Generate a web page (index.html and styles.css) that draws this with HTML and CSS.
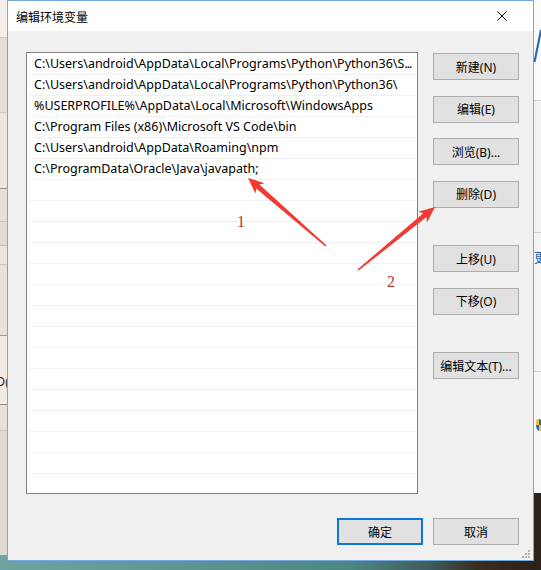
FILE: index.html
```html
<!DOCTYPE html>
<html lang="zh-CN">
<head>
<meta charset="utf-8">
<title>编辑环境变量</title>
<link rel="stylesheet" href="styles.css">
</head>
<body>
<div class="desktop">
  <div class="bg-left">
    <span class="peek-text">D(</span>
  </div>

  <div class="dialog">
    <div class="titlebar">
      <span class="title">编辑环境变量</span>
      <svg class="close" width="10" height="10" viewBox="0 0 10 10"><path d="M0.5 0.5 L9.5 9.5 M9.5 0.5 L0.5 9.5" stroke="#000" stroke-width="1" fill="none"/></svg>
    </div>
    <div class="body">
      <div class="main">
        <div class="list">
          <div class="row">C:\Users\android\AppData\Local\Programs\Python\Python36\S<span class="ell">...</span></div>
          <div class="row">C:\Users\android\AppData\Local\Programs\Python\Python36\</div>
          <div class="row">%USERPROFILE%\AppData\Local\Microsoft\WindowsApps</div>
          <div class="row">C:\Program Files (x86)\Microsoft VS Code\bin</div>
          <div class="row">C:\Users\android\AppData\Roaming\npm</div>
          <div class="row">C:\ProgramData\Oracle\Java\javapath;</div>
          <div class="row"></div>
          <div class="row"></div>
          <div class="row"></div>
          <div class="row"></div>
          <div class="row"></div>
          <div class="row"></div>
          <div class="row"></div>
          <div class="row"></div>
          <div class="row"></div>
          <div class="row"></div>
          <div class="row"></div>
          <div class="row"></div>
          <div class="row"></div>
          <div class="row"></div>
          <div class="row"></div>
        </div>
        <div class="side">
          <div class="btn">新建(N)</div>
          <div class="btn">编辑(E)</div>
          <div class="btn">浏览(B)...</div>
          <div class="btn">删除(D)</div>
          <div class="btn gap-lg">上移(U)</div>
          <div class="btn">下移(O)</div>
          <div class="btn gap-lg">编辑文本(T)...</div>
        </div>
      </div>
      <div class="footer">
        <div class="btn default">确定</div>
        <div class="btn">取消</div>
      </div>
    </div>
    <svg class="grip" width="9" height="9" viewBox="0 0 9 9">
      <rect x="7" y="1" width="2" height="2" fill="#b4b4b4"/>
      <rect x="4" y="4" width="2" height="2" fill="#b4b4b4"/>
      <rect x="7" y="4" width="2" height="2" fill="#b4b4b4"/>
      <rect x="1" y="7" width="2" height="2" fill="#b4b4b4"/>
      <rect x="4" y="7" width="2" height="2" fill="#b4b4b4"/>
      <rect x="7" y="7" width="2" height="2" fill="#b4b4b4"/>
    </svg>
  </div>

  <div class="bg-right">
    <svg class="peek-a" width="7" height="40" viewBox="0 0 7 40"><path d="M0.5 38 L7 6" stroke="#2b6db5" stroke-width="2.2" fill="none"/></svg>
    <span class="peek-cn">更</span>
    <svg class="peek-shield" width="7" height="12" viewBox="0 0 7 12"><path d="M3 0 L7 1.5 L7 12 L3 12 Q0 10 0 6 L0 1.5 Z" fill="#2a64b8"/><path d="M3 6 L7 6 L7 12 L3 12 Z" fill="#f2c230"/><path d="M0 1.5 L3 0 L3 6 L0 6 Z" fill="#f2c230"/></svg>
  </div>

  <svg class="arrows" width="541" height="570" viewBox="0 0 541 570">
    <polygon fill="#f03a32" points="248,178 264.7,183.2 259.4,184.6 326.6,245.4 325.4,246.6 256.2,188.4 255.5,193.8"/>
    <polygon fill="#f03a32" points="435,207 427,222.5 426.5,217.1 358.6,270.6 357.4,269.4 423.3,213.3 418.2,211.7"/>
  </svg>
  <span class="label label-1">1</span>
  <span class="label label-2">2</span>
</div>
</body>
</html>
```

FILE: styles.css
```css
* { box-sizing: border-box; }
html, body { margin: 0; padding: 0; }
body {
  width: 541px;
  height: 570px;
  overflow: hidden;
  font-family: "Noto Sans", "Noto Sans CJK SC", sans-serif;
  font-size: 12px;
  color: #000;
}
.desktop {
  position: relative;
  width: 541px;
  height: 570px;
  display: flex;
  align-items: flex-start;
  background: linear-gradient(to right, #6ea3a0 0%, #5e9593 35%, #4d8584 65%, #3d5a58 80%, #3a2d22 88%, #2c2118 100%);
}

/* background windows */
.bg-left {
  width: 7px;
  height: 555px;
  overflow: hidden;
  display: flex;
  justify-content: flex-end;
  background: linear-gradient(to bottom,
    #f3eeea 0 37px, #cdc9c5 37px 38px,
    #e2deda 38px 112px, #cfcbc7 112px 113px,
    #eae6e2 113px 188px, #8e8e8e 188px 189px,
    #e3dfdb 189px 221px, #cbc7c3 221px 222px,
    #dfdbd7 222px 245px, #c6c2be 245px 246px,
    #e8e4e0 246px 264px, #cbc7c3 264px 265px,
    #e6e2de 265px 335px, #9a9a9a 335px 336px,
    #f0ece8 336px 404px, #8e8e8e 404px 405px,
    #e4e0dc 405px 430px, #cbc7c3 430px 431px,
    #dedad6 431px 555px);
}
.peek-text {
  margin-top: 374px;
  margin-right: -2px;
  font-family: "Liberation Sans", sans-serif;
  font-size: 12px;
  line-height: 16px;
  color: #222;
  white-space: nowrap;
}
.bg-right {
  width: 7px;
  height: 493px;
  display: flex;
  flex-direction: column;
  overflow: hidden;
  background: linear-gradient(to bottom,
    #fafafa 0 100px, #d2d2d2 100px 101px,
    #f2f2f2 101px 232px, #d2d2d2 232px 233px,
    #f4f4f4 233px 371px, #d2d2d2 371px 372px,
    #f6f6f6 372px 493px);
}
.peek-a { margin-top: 24px; flex: none; }
.peek-cn {
  margin-top: 186px;
  font-family: "Noto Sans CJK SC", sans-serif;
  font-size: 13px;
  line-height: 14px;
  color: #1f5fae;
  white-space: nowrap;
}
.peek-shield { margin-top: 155px; margin-left: 2px; flex: none; }

/* dialog */
.dialog {
  position: relative;
  width: 527px;
  height: 561px;
  border: 1px solid #74a9df;
  background: #f0f0f0;
  display: flex;
  flex-direction: column;
  flex: none;
}
.titlebar {
  height: 30px;
  flex: none;
  background: #fff;
  display: flex;
  align-items: center;
  justify-content: space-between;
  padding: 0 26px 0 8px;
}
.title {
  font-family: "Noto Sans CJK SC", sans-serif;
  font-size: 12px;
  color: #000;
}
.close { display: block; }
.body {
  flex: 1;
  padding: 21px 14px 0 18px;
  display: flex;
  flex-direction: column;
}
.main { display: flex; gap: 15px; }
.list {
  width: 392px;
  height: 442px;
  border: 1px solid #828282;
  background: #fff;
  padding-top: 1px;
  overflow: hidden;
  flex: none;
}
.row {
  height: 21px;
  margin-left: 2px;
  border-bottom: 1px solid #f0f0f0;
  padding-left: 5px;
  line-height: 20px;
  white-space: nowrap;
  overflow: hidden;
  font-size: 12.5px;
}
.ell { letter-spacing: -1px; }
.side {
  width: 86px;
  display: flex;
  flex-direction: column;
  gap: 15.5px;
  padding-top: 1px;
}
.btn {
  height: 27px;
  border: 1px solid #adadad;
  background: #e1e1e1;
  display: flex;
  align-items: center;
  justify-content: center;
  font-size: 12px;
  white-space: nowrap;
}
.side .gap-lg { margin-top: 22px; }
.footer {
  display: flex;
  justify-content: flex-end;
  gap: 10px;
  margin-top: 24px;
}
.footer .btn { width: 86px; }
.btn.default { border: 2px solid #0a78d4; }
.grip { position: absolute; right: 3px; bottom: 2px; }

/* annotations */
.arrows { position: absolute; left: 0; top: 0; pointer-events: none; }
.label {
  position: absolute;
  font-family: "Liberation Serif", serif;
  font-size: 16px;
  line-height: 16px;
  color: #c9302c;
}
.label-1 { left: 237px; top: 214px; }
.label-2 { left: 387px; top: 274px; }
```
